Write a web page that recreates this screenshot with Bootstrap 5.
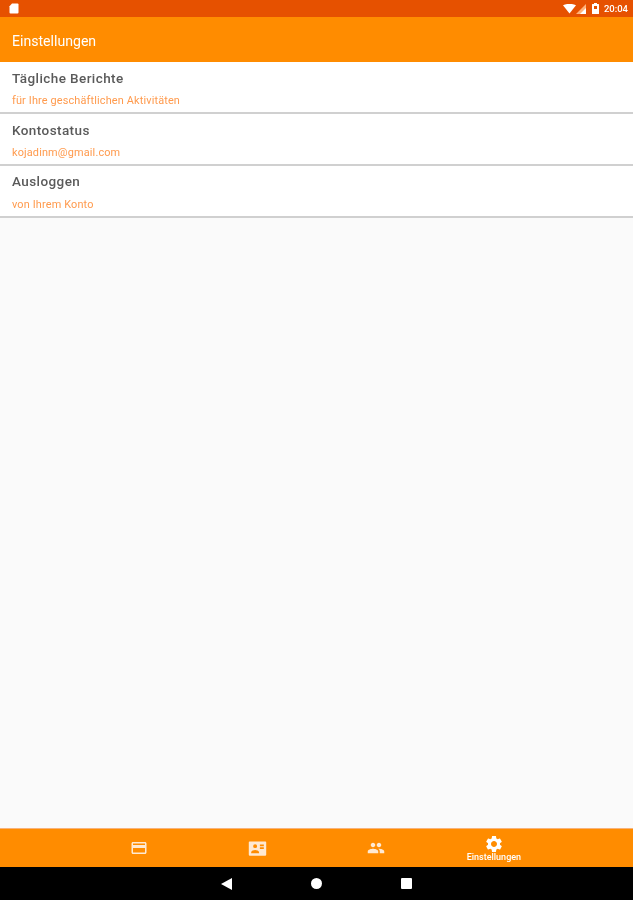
<!DOCTYPE html>
<html>
<head>
    <title>Einstellungen</title>
    <link href="https://cdn.jsdelivr.net/npm/bootstrap@5.3.0/dist/css/bootstrap.min.css" rel="stylesheet">
    <style>
        html, body { height: 100%; }
        body { font-family: Roboto, "Liberation Sans", sans-serif; background: #fafafa; overflow: hidden; }
        .screen { height: 900px; filter: blur(.4px); }
        .status-bar { height: 17px; background: #e65100; padding: 0 5px 0 9px; }
        .status-battery { margin-left: 6px; }
        .status-time { font-size: 9.5px; font-weight: 500; line-height: 17px; margin-left: 5px; }
        .app-bar { height: 45px; background: #ff8c00; padding: 5px 0 0 12px; font-size: 14.1px; }
        .setting-row { height: 52px; padding: 8px 12px 0; background: #fff; border-bottom: 2px solid #d0d0d0; }
        .setting-row:last-child { padding-top: 7px; }
        .setting-row:last-child .setting-sub { margin-top: 10px; }
        .setting-title { font-size: 13.5px; font-weight: 500; line-height: 16px; color: #5a5a5a; letter-spacing: .42px; }
        .setting-sub { font-size: 10.9px; line-height: 12px; margin-top: 9px; color: #ff9a4d; letter-spacing: .15px; }
        .bottom-nav { height: 39px; background: #ff8c00; padding: 0 80px; border-top: 1px solid #f7b27a; }
        .nav-slot { flex: 1 1 0; }
        .nav-label { font-size: 9px; font-weight: 500; line-height: 9px; margin-top: -1px; }
        .system-bar { height: 33px; background: #000; gap: 79px; }
        .sys-dot { width: 11px; height: 11px; border-radius: 50%; background: #fff; }
        .sys-square { width: 11px; height: 11px; border-radius: 1px; background: #fff; }
    </style>
</head>
<body>
    <div class="screen d-flex flex-column">
        <div class="status-bar d-flex align-items-center text-white">
            <svg width="10" height="11" viewBox="0 0 10 11" fill="#fff"><path d="M3 .5h5.500a1 1 0 0 1 1 1v8a1 1 0 0 1-1 1h-7a1 1 0 0 1-1-1V3.200z"/></svg>
            <div class="ms-auto d-flex align-items-center">
                <svg width="13" height="10" viewBox="0 0 13 10" fill="#fff"><path d="M0 1.200C3.800-.6 9.200-.6 13 1.200L6.500 9.600z"/></svg>
                <svg width="10" height="10" viewBox="0 0 10 10"><path d="M10 0v10H0z" fill="#ffb37a"/><path d="M10 4v6H4z" fill="#fff"/></svg>
                <svg class="status-battery" width="7" height="11" viewBox="0 0 7 11" fill="#fff"><path d="M2 0h3v1h1.500a.5.5 0 0 1 .5.5v9a.5.5 0 0 1-.5.5H.5a.5.5 0 0 1-.5-.5v-9A.5.5 0 0 1 .5 1H2z"/><path d="M2 3h3v3H2z" fill="#e65100"/></svg>
                <span class="status-time">20:04</span>
            </div>
        </div>
        <div class="app-bar d-flex align-items-center text-white">Einstellungen</div>
        <div>
            <div class="setting-row">
                <div class="setting-title">Tägliche Berichte</div>
                <div class="setting-sub">für Ihre geschäftlichen Aktivitäten</div>
            </div>
            <div class="setting-row">
                <div class="setting-title">Kontostatus</div>
                <div class="setting-sub">kojadinm@gmail.com</div>
            </div>
            <div class="setting-row">
                <div class="setting-title">Ausloggen</div>
                <div class="setting-sub">von Ihrem Konto</div>
            </div>
        </div>
        <div class="flex-grow-1"></div>
        <div class="bottom-nav d-flex text-white">
            <div class="nav-slot d-flex align-items-center justify-content-center">
                <svg width="18" height="18" viewBox="0 0 24 24" fill="#ffe9d2"><path d="M20 4H4c-1.110 0-1.990.89-1.990 2L2 18c0 1.110.89 2 2 2h16c1.110 0 2-.89 2-2V6c0-1.110-.89-2-2-2zm0 14H4v-6h16v6zm0-10H4V6h16v2z"/></svg>
            </div>
            <div class="nav-slot d-flex align-items-center justify-content-center">
                <svg width="19" height="19" viewBox="0 0 24 24" fill="#ffe9d2"><path fill-rule="evenodd" d="M2 3h20a1 1 0 0 1 1 1v16a1 1 0 0 1-1 1H2a1 1 0 0 1-1-1V4a1 1 0 0 1 1-1zm7 3.500A2.500 2.500 0 1 0 9 11.500 2.500 2.500 0 0 0 9 6.500zM4 17v1h10v-1c0-2-3.300-3-5-3s-5 1-5 3zM15 7v2h5V7zm0 3.500v2h5v-2z"/></svg>
            </div>
            <div class="nav-slot d-flex align-items-center justify-content-center">
                <svg width="18" height="18" viewBox="0 0 24 24" fill="#ffe9d2"><path d="M16 11c1.660 0 2.990-1.340 2.990-3S17.660 5 16 5c-1.660 0-3 1.340-3 3s1.340 3 3 3zm-8 0c1.660 0 2.990-1.340 2.990-3S9.660 5 8 5C6.340 5 5 6.340 5 8s1.340 3 3 3zm0 2c-2.330 0-7 1.170-7 3.500V19h14v-2.500c0-2.330-4.670-3.500-7-3.500zm8 0c-.29 0-.62.02-.97.05 1.160.84 1.970 1.970 1.970 3.450V19h6v-2.500c0-2.330-4.670-3.500-7-3.500z"/></svg>
            </div>
            <div class="nav-slot d-flex flex-column align-items-center justify-content-center">
                <svg width="20" height="20" viewBox="0 0 24 24" fill="#fff"><path d="M19.140 12.940c.04-.3.06-.61.06-.94 0-.32-.02-.64-.07-.94l2.030-1.580c.18-.14.23-.41.12-.61l-1.920-3.320c-.12-.22-.37-.29-.59-.22l-2.390.96c-.5-.38-1.030-.7-1.620-.94l-.36-2.540c-.04-.24-.24-.41-.48-.41h-3.840c-.24 0-.43.17-.47.41l-.36 2.540c-.59.24-1.130.57-1.620.94l-2.390-.96c-.22-.08-.47 0-.59.22L2.740 8.870c-.12.21-.08.47.12.61l2.030 1.580c-.05.3-.09.63-.09.94s.02.64.07.94l-2.030 1.580c-.18.14-.23.41-.12.61l1.920 3.320c.12.22.37.29.59.22l2.390-.96c.5.38 1.030.7 1.620.94l.36 2.540c.05.24.24.41.48.41h3.840c.24 0 .44-.17.47-.41l.36-2.540c.59-.24 1.130-.56 1.620-.94l2.390.96c.22.08.47 0 .59-.22l1.920-3.320c.12-.22.07-.47-.12-.61l-2.010-1.580zM12 15.600c-1.980 0-3.600-1.620-3.600-3.600s1.620-3.600 3.600-3.600 3.600 1.620 3.600 3.600-1.620 3.600-3.600 3.600z"/></svg>
                <div class="nav-label">Einstellungen</div>
            </div>
        </div>
        <div class="system-bar d-flex align-items-center justify-content-center">
            <svg width="11" height="12" viewBox="0 0 11 12" fill="#fff"><path d="M11 0v12L0 6z"/></svg>
            <div class="sys-dot"></div>
            <div class="sys-square"></div>
        </div>
    </div>
    <script src="https://cdn.jsdelivr.net/npm/bootstrap@5.3.0/dist/js/bootstrap.bundle.min.js"></script>
</body>
</html>
